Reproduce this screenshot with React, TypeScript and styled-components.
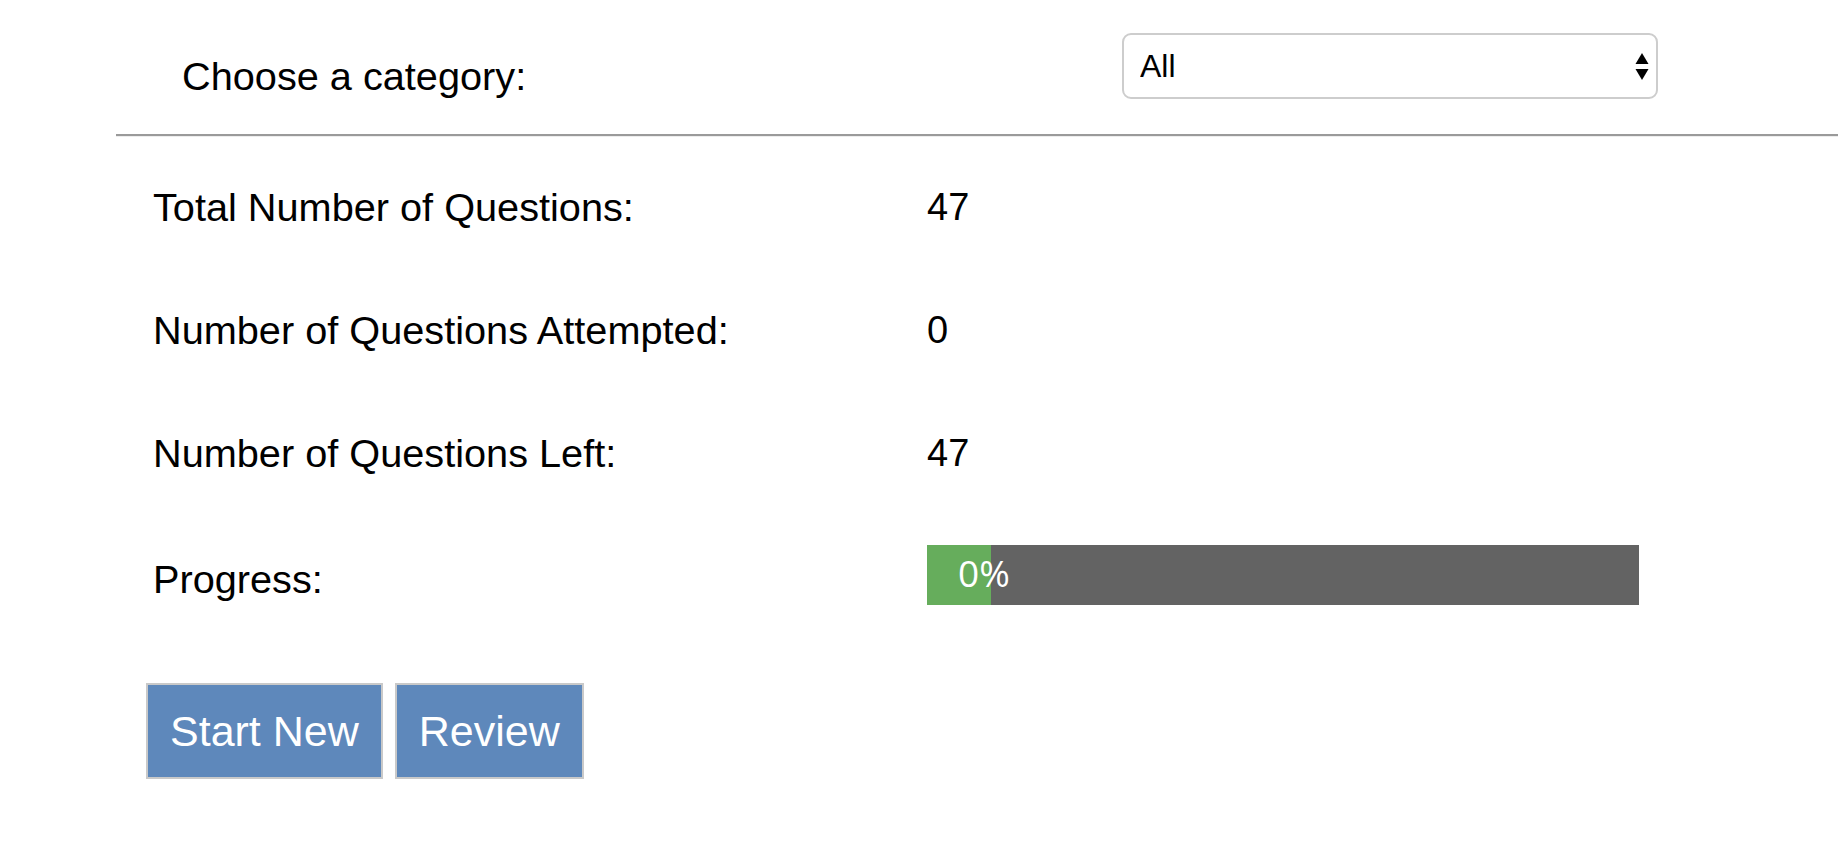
import React from "react";
import styled, { createGlobalStyle } from "styled-components";

const GlobalStyle = createGlobalStyle`
  html, body {
    margin: 0;
    padding: 0;
    background: #ffffff;
    overflow-x: hidden;
  }
  body {
    font-family: "Liberation Sans", Arial, Helvetica, sans-serif;
    color: #000000;
  }
`;

const Page = styled.div`
  width: 1838px;
  min-height: 848px;
  background: #ffffff;
`;

const Header = styled.div`
  display: flex;
  align-items: flex-start;
  margin-left: 116px;
  height: 136px;
  padding-top: 33px;
  box-sizing: border-box;
  border-bottom: 2px solid #9a9a9a;
  box-shadow: 0 1px 0 #ededed;
`;

const CategoryLabel = styled.label`
  display: block;
  width: 1006px;
  box-sizing: border-box;
  padding-left: 66px;
  margin-top: 20px;
  font-size: 39.7px;
  line-height: 46px;
`;

const SelectWrap = styled.div`
  position: relative;
  width: 536px;
  height: 66px;
`;

const Select = styled.select`
  appearance: none;
  -webkit-appearance: none;
  width: 100%;
  height: 100%;
  box-sizing: border-box;
  border: 2px solid #cdcdcd;
  border-radius: 9px;
  background: #ffffff;
  padding: 0 40px 0 16px;
  font-family: "Liberation Sans", Arial, Helvetica, sans-serif;
  font-size: 32px;
  color: #000000;
  outline: none;
`;

const Arrows = styled.svg`
  position: absolute;
  right: 9px;
  top: 19px;
  pointer-events: none;
`;

const Stats = styled.div`
  padding-top: 9px;
  padding-left: 153px;
`;

const StatRow = styled.div<{ $height?: number }>`
  display: grid;
  grid-template-columns: 774px auto;
  align-items: center;
  height: ${(p) => p.$height ?? 123}px;
`;

const StatLabel = styled.div<{ $shift?: number }>`
  font-size: 39.7px;
  line-height: 46px;
  padding-top: ${(p) => p.$shift ?? 0}px;
`;

const StatValue = styled.div`
  font-size: 38px;
  line-height: 46px;
`;

const ProgressTrack = styled.div`
  width: 712px;
  height: 60px;
  background: #636363;
  display: flex;
`;

const ProgressFill = styled.div`
  height: 100%;
  background: #66ad5c;
  display: flex;
  align-items: center;
  box-sizing: border-box;
  padding-left: 31px;
  padding-bottom: 4px;
  white-space: nowrap;
  overflow: visible;
  font-family: "Open Sans", "Liberation Sans", sans-serif;
  font-size: 37px;
  color: #ffffff;
`;

const Actions = styled.div`
  display: flex;
  gap: 12px;
  margin-top: 48px;
  padding-left: 146px;
`;

const Button = styled.button`
  height: 96px;
  box-sizing: border-box;
  padding: 0 22px;
  border: 2px solid #c9c9c9;
  border-radius: 0;
  background: #5e88bb;
  color: #ffffff;
  font-family: "Liberation Sans", Arial, Helvetica, sans-serif;
  font-size: 43px;
  cursor: pointer;
`;

const stats = [
  { label: "Total Number of Questions:", value: "47" },
  { label: "Number of Questions Attempted:", value: "0" },
  { label: "Number of Questions Left:", value: "47" },
];

export default function App() {
  const total = 47;
  const attempted = 0;
  const pct = Math.round((attempted / total) * 100);
  return (
    <Page>
      <GlobalStyle />
      <Header>
        <CategoryLabel htmlFor="category">Choose a category:</CategoryLabel>
        <SelectWrap>
          <Select id="category" defaultValue="All">
            <option value="All">All</option>
          </Select>
          <Arrows width="14" height="30" viewBox="0 0 14 30">
            <polygon points="7,1 13.5,12 0.5,12" fill="#000" />
            <polygon points="0.5,17 13.5,17 7,28" fill="#000" />
          </Arrows>
        </SelectWrap>
      </Header>
      <Stats>
        {stats.map((s) => (
          <StatRow key={s.label}>
            <StatLabel>{s.label}</StatLabel>
            <StatValue>{s.value}</StatValue>
          </StatRow>
        ))}
        <StatRow $height={121}>
          <StatLabel $shift={8}>Progress:</StatLabel>
          <ProgressTrack>
            <ProgressFill style={{ width: `${Math.max(pct, 9)}%` }}>
              {pct}%
            </ProgressFill>
          </ProgressTrack>
        </StatRow>
      </Stats>
      <Actions>
        <Button>Start New</Button>
        <Button>Review</Button>
      </Actions>
    </Page>
  );
}
